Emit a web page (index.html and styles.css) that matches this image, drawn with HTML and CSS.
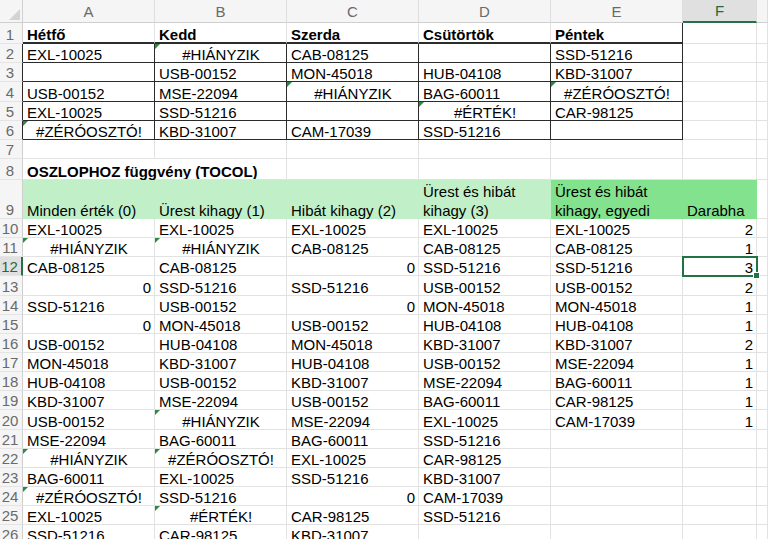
FILE: index.html
```html
<!DOCTYPE html>
<html lang="hu">
<head>
<meta charset="utf-8">
<title>OSZLOPHOZ függvény</title>
<link rel="stylesheet" href="styles.css">
</head>
<body>
<div class="sheet">
  <div class="corner"><svg width="11" height="11" viewBox="0 0 11 11"><polygon points="11,0 11,11 0,11" fill="#d3d3d3"/></svg></div>
  <div class="h">A</div><div class="h">B</div><div class="h">C</div><div class="h">D</div><div class="h">E</div><div class="h hs">F</div><div class="h"></div>

  <div class="r">1</div>
  <div class="c b t1">Hétfő</div><div class="c b t1">Kedd</div><div class="c b t1">Szerda</div><div class="c b t1">Csütörtök</div><div class="c b t1 te">Péntek</div><div class="c"></div><div class="c"></div>

  <div class="r rt">2</div>
  <div class="c tb">EXL-10025</div><div class="c tb e">#HIÁNYZIK</div><div class="c tb">CAB-08125</div><div class="c tb"></div><div class="c tb">SSD-51216</div><div class="c"></div><div class="c"></div>

  <div class="r rt">3</div>
  <div class="c tb"></div><div class="c tb">USB-00152</div><div class="c tb">MON-45018</div><div class="c tb">HUB-04108</div><div class="c tb">KBD-31007</div><div class="c"></div><div class="c"></div>

  <div class="r rt">4</div>
  <div class="c tb">USB-00152</div><div class="c tb">MSE-22094</div><div class="c tb e">#HIÁNYZIK</div><div class="c tb">BAG-60011</div><div class="c tb e">#ZÉRÓOSZTÓ!</div><div class="c"></div><div class="c"></div>

  <div class="r rt">5</div>
  <div class="c tb">EXL-10025</div><div class="c tb">SSD-51216</div><div class="c tb"></div><div class="c tb e">#ÉRTÉK!</div><div class="c tb">CAR-98125</div><div class="c"></div><div class="c"></div>

  <div class="r rt">6</div>
  <div class="c tb e">#ZÉRÓOSZTÓ!</div><div class="c tb">KBD-31007</div><div class="c tb">CAM-17039</div><div class="c tb">SSD-51216</div><div class="c tb"></div><div class="c"></div><div class="c"></div>

  <div class="r">7</div>
  <div class="c"></div><div class="c"></div><div class="c"></div><div class="c"></div><div class="c"></div><div class="c"></div><div class="c"></div>

  <div class="r">8</div>
  <div class="c b nr">OSZLOPHOZ függvény (TOCOL)</div><div class="c"></div><div class="c"></div><div class="c"></div><div class="c"></div><div class="c"></div><div class="c"></div>

  <div class="r">9</div>
  <div class="c g1">Minden érték (0)</div><div class="c g1">Ürest kihagy (1)</div><div class="c g1">Hibát kihagy (2)</div><div class="c g1 w"><span>Ürest és hibát<br>kihagy (3)</span></div><div class="c g2 w"><span>Ürest és hibát<br>kihagy, egyedi</span></div><div class="c g2">Darabha</div><div class="c"></div>

  <div class="r">10</div>
  <div class="c">EXL-10025</div><div class="c">EXL-10025</div><div class="c">EXL-10025</div><div class="c">EXL-10025</div><div class="c">EXL-10025</div><div class="c n">2</div><div class="c"></div>

  <div class="r">11</div>
  <div class="c e">#HIÁNYZIK</div><div class="c e">#HIÁNYZIK</div><div class="c">CAB-08125</div><div class="c">CAB-08125</div><div class="c">CAB-08125</div><div class="c n">1</div><div class="c"></div>

  <div class="r rs">12</div>
  <div class="c">CAB-08125</div><div class="c">CAB-08125</div><div class="c n">0</div><div class="c">SSD-51216</div><div class="c">SSD-51216</div><div class="c n sel">3</div><div class="c"></div>

  <div class="r">13</div>
  <div class="c n">0</div><div class="c">SSD-51216</div><div class="c">SSD-51216</div><div class="c">USB-00152</div><div class="c">USB-00152</div><div class="c n">2</div><div class="c"></div>

  <div class="r">14</div>
  <div class="c">SSD-51216</div><div class="c">USB-00152</div><div class="c n">0</div><div class="c">MON-45018</div><div class="c">MON-45018</div><div class="c n">1</div><div class="c"></div>

  <div class="r">15</div>
  <div class="c n">0</div><div class="c">MON-45018</div><div class="c">USB-00152</div><div class="c">HUB-04108</div><div class="c">HUB-04108</div><div class="c n">1</div><div class="c"></div>

  <div class="r">16</div>
  <div class="c">USB-00152</div><div class="c">HUB-04108</div><div class="c">MON-45018</div><div class="c">KBD-31007</div><div class="c">KBD-31007</div><div class="c n">2</div><div class="c"></div>

  <div class="r">17</div>
  <div class="c">MON-45018</div><div class="c">KBD-31007</div><div class="c">HUB-04108</div><div class="c">USB-00152</div><div class="c">MSE-22094</div><div class="c n">1</div><div class="c"></div>

  <div class="r">18</div>
  <div class="c">HUB-04108</div><div class="c">USB-00152</div><div class="c">KBD-31007</div><div class="c">MSE-22094</div><div class="c">BAG-60011</div><div class="c n">1</div><div class="c"></div>

  <div class="r">19</div>
  <div class="c">KBD-31007</div><div class="c">MSE-22094</div><div class="c">USB-00152</div><div class="c">BAG-60011</div><div class="c">CAR-98125</div><div class="c n">1</div><div class="c"></div>

  <div class="r">20</div>
  <div class="c">USB-00152</div><div class="c e">#HIÁNYZIK</div><div class="c">MSE-22094</div><div class="c">EXL-10025</div><div class="c">CAM-17039</div><div class="c n">1</div><div class="c"></div>

  <div class="r">21</div>
  <div class="c">MSE-22094</div><div class="c">BAG-60011</div><div class="c">BAG-60011</div><div class="c">SSD-51216</div><div class="c"></div><div class="c"></div><div class="c"></div>

  <div class="r">22</div>
  <div class="c e">#HIÁNYZIK</div><div class="c e">#ZÉRÓOSZTÓ!</div><div class="c">EXL-10025</div><div class="c">CAR-98125</div><div class="c"></div><div class="c"></div><div class="c"></div>

  <div class="r">23</div>
  <div class="c">BAG-60011</div><div class="c">EXL-10025</div><div class="c">SSD-51216</div><div class="c">KBD-31007</div><div class="c"></div><div class="c"></div><div class="c"></div>

  <div class="r">24</div>
  <div class="c e">#ZÉRÓOSZTÓ!</div><div class="c">SSD-51216</div><div class="c n">0</div><div class="c">CAM-17039</div><div class="c"></div><div class="c"></div><div class="c"></div>

  <div class="r">25</div>
  <div class="c">EXL-10025</div><div class="c e">#ÉRTÉK!</div><div class="c">CAR-98125</div><div class="c">SSD-51216</div><div class="c"></div><div class="c"></div><div class="c"></div>

  <div class="r">26</div>
  <div class="c">SSD-51216</div><div class="c">CAR-98125</div><div class="c">KBD-31007</div><div class="c"></div><div class="c"></div><div class="c"></div><div class="c"></div>
</div>
</body>
</html>
```

FILE: styles.css
```css
html, body {
  margin: 0;
  background: #fff;
  overflow: hidden;
}

.sheet {
  display: grid;
  grid-template-columns: 23px repeat(5, 132px) 74px 1fr;
  grid-template-rows: 23px 21px repeat(5, 19.2px) 19.5px 21px 38.6px repeat(17, 19.15px);
  width: 768px;
  font-family: "Liberation Sans", Arial, sans-serif;
  font-size: 15px;
  color: #000;
}

.sheet > div {
  box-sizing: border-box;
  min-width: 0;
}

.corner {
  background: #f5f5f5;
  border-right: 1px solid #cfcfcf;
  border-bottom: 1px solid #cfcfcf;
  display: flex;
  align-items: flex-end;
  justify-content: flex-end;
  padding: 0 2px 2px 0;
}

.corner svg {
  display: block;
}

.h {
  background: #f5f5f5;
  border-right: 1px solid #dedede;
  border-bottom: 1px solid #cfcfcf;
  color: #6a6a6a;
  display: flex;
  align-items: center;
  justify-content: center;
  font-size: 15px;
}

.h.hs {
  background: #e0e0e0;
  color: #1e6b3f;
  border-bottom: 2px solid #217346;
}

.r {
  background: #f5f5f5;
  border-right: 1px solid #cfcfcf;
  border-bottom: 1px solid #e4e4e4;
  color: #6a6a6a;
  display: flex;
  align-items: flex-end;
  justify-content: center;
  font-size: 15px;
  line-height: 15px;
  padding: 0 2px 1px 0;
}

.r.rt {
  border-right-color: #2b2b2b;
}

.r.rs {
  background: #e0e0e0;
  color: #1e6b3f;
  border-right: 2px solid #217346;
}

.c {
  display: flex;
  align-items: flex-end;
  justify-content: flex-start;
  padding: 0 3px 0 4px;
  border-right: 1px solid #e2e2e2;
  border-bottom: 1px solid #e2e2e2;
  line-height: 15px;
  white-space: nowrap;
}

.b {
  font-weight: bold;
}

.n {
  justify-content: flex-end;
}

.e {
  position: relative;
  justify-content: center;
}

.e::before {
  content: "";
  position: absolute;
  top: 0;
  left: 0;
  border-top: 5px solid #2a8a3e;
  border-right: 5px solid transparent;
}

.t1 {
  border-bottom: 2px solid #2b2b2b;
}

.te {
  border-right-color: #2b2b2b;
}

.tb {
  border-right-color: #2b2b2b;
  border-bottom-color: #2b2b2b;
}

.nr {
  border-right-color: transparent;
}

.g1 {
  background: #c1f0c8;
  border-color: #c1f0c8;
}

.g2 {
  background: #83e28e;
  border-color: #83e28e;
}

.w {
  white-space: normal;
}

.w span {
  line-height: 19px;
  margin-bottom: -2px;
}

.sel {
  position: relative;
  outline: 2px solid #217346;
  outline-offset: -1px;
  z-index: 2;
}

.sel::after {
  content: "";
  position: absolute;
  right: -4px;
  bottom: -4px;
  width: 5px;
  height: 5px;
  background: #217346;
  border: 1px solid #fff;
}
```
